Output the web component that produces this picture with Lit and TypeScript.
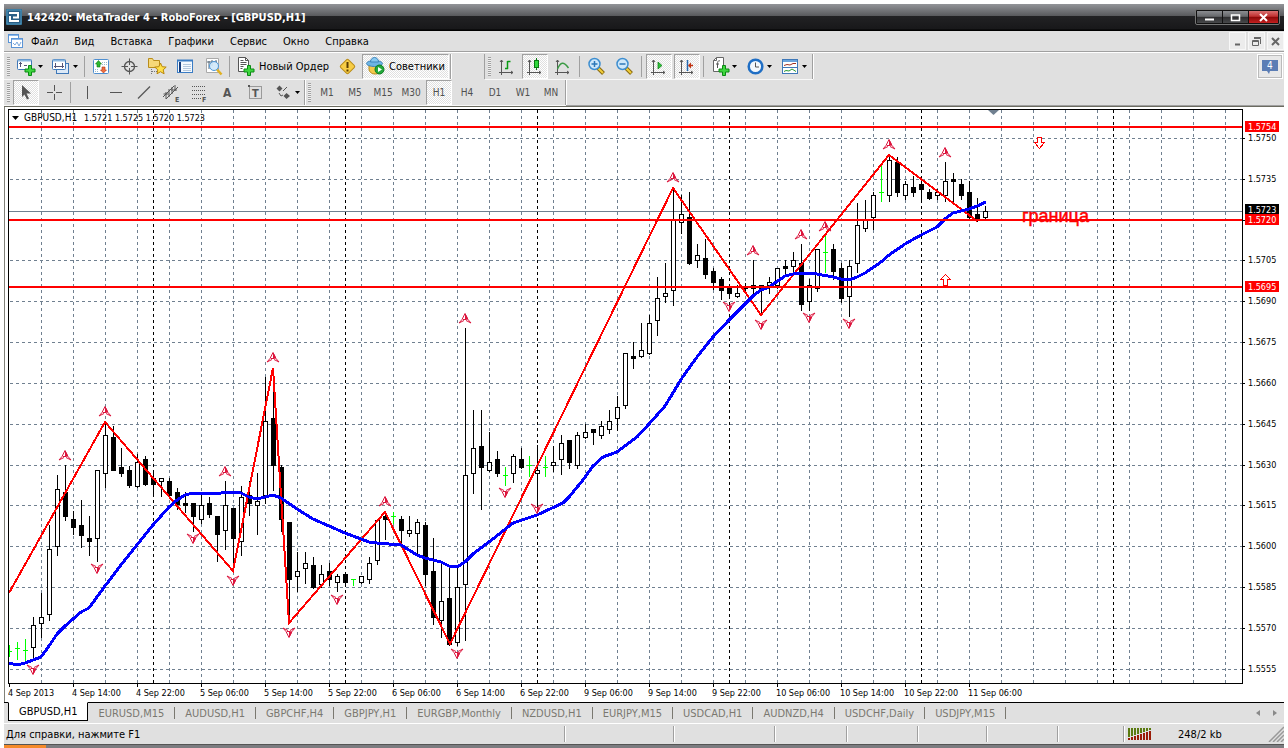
import { LitElement, html, svg, css, nothing } from "lit";
import { customElement, property } from "lit/decorators.js";

type Candle = [high: number, top: number, bottom: number, low: number, kind: "u" | "d" | "g"];

const STEP = 8;
const FIRST_X = 9;

const CANDLES: Candle[] = [
  [645, 651, 651, 656, "g"], [642, 648, 648, 659, "g"], [639, 650, 650, 661, "g"], [617, 625, 647, 659, "u"],
  [593, 617, 623, 637, "u"], [525, 549, 614, 620, "u"], [475, 489, 546, 555, "u"], [465, 492, 516, 520, "d"],
  [511, 519, 527, 534, "d"], [500, 525, 535, 547, "d"], [516, 538, 541, 555, "d"], [470, 470, 538, 561, "u"],
  [423, 435, 473, 487, "u"], [426, 437, 470, 470, "d"], [448, 467, 473, 476, "d"], [466, 470, 485, 487, "d"],
  [454, 462, 486, 487, "u"], [456, 459, 484, 485, "d"], [473, 478, 484, 496, "d"], [478, 478, 481, 496, "u"],
  [478, 481, 495, 496, "d"], [488, 492, 504, 509, "d"], [492, 503, 505, 512, "d"], [503, 503, 516, 531, "d"],
  [492, 505, 519, 523, "u"], [497, 503, 514, 517, "d"], [516, 516, 534, 561, "d"], [481, 505, 530, 549, "u"],
  [508, 508, 538, 570, "d"], [486, 497, 541, 555, "u"], [481, 495, 503, 515, "d"], [473, 501, 505, 534, "u"],
  [377, 421, 495, 503, "u"], [368, 418, 465, 490, "d"], [465, 467, 519, 531, "d"], [522, 522, 579, 623, "d"],
  [552, 571, 576, 591, "u"], [552, 563, 568, 583, "u"], [557, 565, 587, 588, "d"], [565, 574, 584, 587, "u"],
  [563, 571, 579, 585, "d"], [574, 576, 582, 591, "u"], [574, 574, 582, 586, "d"], [579, 579, 579, 585, "g"],
  [576, 576, 582, 583, "u"], [557, 563, 579, 583, "u"], [520, 520, 560, 564, "u"], [512, 516, 519, 539, "d"],
  [512, 516, 516, 523, "g"], [516, 519, 530, 543, "d"], [516, 530, 533, 536, "u"], [519, 522, 533, 553, "u"],
  [522, 525, 574, 585, "d"], [538, 571, 617, 624, "d"], [562, 601, 620, 637, "u"], [567, 598, 644, 645, "d"],
  [567, 587, 642, 645, "u"], [328, 475, 584, 640, "u"], [410, 448, 473, 493, "u"], [410, 446, 467, 509, "d"],
  [432, 462, 470, 471, "u"], [451, 459, 473, 476, "d"], [467, 475, 475, 485, "g"], [454, 456, 473, 482, "u"],
  [448, 459, 467, 468, "d"], [456, 465, 465, 476, "g"], [445, 470, 473, 507, "u"], [456, 467, 467, 476, "g"],
  [446, 462, 465, 471, "u"], [435, 443, 459, 474, "u"], [440, 440, 462, 468, "d"], [432, 435, 465, 468, "u"],
  [424, 432, 437, 438, "u"], [429, 429, 432, 444, "d"], [421, 426, 435, 438, "u"], [410, 421, 429, 433, "u"],
  [396, 407, 418, 430, "u"], [353, 353, 405, 408, "u"], [342, 356, 358, 368, "d"], [323, 350, 356, 357, "u"],
  [315, 323, 353, 354, "u"], [277, 298, 320, 335, "u"], [263, 293, 296, 302, "u"], [190, 220, 290, 305, "u"],
  [195, 214, 222, 233, "u"], [192, 217, 263, 264, "d"], [244, 255, 260, 267, "u"], [239, 258, 274, 278, "d"],
  [268, 271, 282, 289, "d"], [277, 279, 290, 299, "d"], [288, 288, 293, 298, "d"], [285, 293, 296, 297, "u"],
  [283, 286, 288, 293, "u"], [260, 285, 288, 293, "d"], [285, 285, 288, 313, "d"], [277, 282, 285, 293, "u"],
  [268, 268, 285, 288, "u"], [260, 266, 268, 275, "d"], [252, 260, 266, 273, "u"], [244, 263, 304, 310, "d"],
  [279, 285, 301, 310, "u"], [249, 249, 288, 291, "u"], [236, 252, 252, 272, "g"], [244, 249, 271, 279, "d"],
  [263, 268, 298, 302, "d"], [260, 266, 296, 316, "u"], [203, 225, 263, 272, "u"], [200, 220, 228, 231, "u"],
  [192, 195, 217, 229, "u"], [163, 192, 192, 201, "g"], [155, 160, 195, 201, "u"], [157, 162, 192, 196, "d"],
  [181, 184, 195, 199, "u"], [176, 187, 192, 196, "d"], [180, 184, 189, 200, "d"], [189, 192, 198, 199, "d"],
  [189, 192, 195, 199, "u"], [162, 181, 195, 201, "u"], [173, 179, 181, 203, "d"], [179, 184, 195, 199, "d"],
  [181, 192, 217, 218, "d"], [198, 214, 219, 221, "d"], [206, 211, 217, 219, "u"],
];

const ZIGZAG = "9,593 105,422 233,571 273,368 289,623 385,512 450,644 673,188 761,315 889,155 977,221";

const AVERAGE =
  "9,663 17,665 25,663 41,657 49,646 57,634 65,626 73,619 81,612 89,608 97,597 105,586 121,565 129,555 137,545 " +
  "153,525 169,507 177,500 185,495 193,493 201,494 209,493 217,494 225,492 241,493 249,497 257,499 273,495 281,498 " +
  "297,509 313,519 329,526 345,533 369,542 377,543 401,545 409,550 417,555 425,558 441,562 449,566 457,567 465,562 " +
  "473,554 489,542 513,523 537,515 563,503 569,497 583,480 593,466 603,457 617,452 637,437 649,424 665,406 682,378 " +
  "697,357 713,337 729,320 753,296 761,290 769,287 785,276 793,274 809,273 817,274 833,277 841,279 849,280 857,277 " +
  "865,273 881,262 889,255 905,244 921,235 937,227 945,219 953,213 969,209 977,206 986,202";

const FRACTALS_UP = [[65, 455], [105, 411], [225, 471], [273, 357], [385, 501], [465, 318], [673, 177], [753, 250], [801, 234], [825, 226], [889, 144], [945, 152]];
const FRACTALS_DOWN = [[33, 669], [97, 568], [193, 538], [233, 580], [289, 632], [337, 599], [457, 653], [505, 492], [537, 508], [729, 306], [761, 324], [809, 317], [849, 323]];

const LEVELS = [127, 220, 287];
const PRICE_ROWS: [string, number][] = [
  ["1.5750", 138], ["1.5735", 179], ["1.5720", 220], ["1.5705", 260], ["1.5690", 301], ["1.5675", 342], ["1.5660", 383],
  ["1.5645", 424], ["1.5630", 465], ["1.5615", 505], ["1.5600", 546], ["1.5585", 587], ["1.5570", 628], ["1.5555", 669],
];
const PRICE_TAGS: [string, number, string][] = [
  ["1.5723", 210, "tag-now"], ["1.5754", 127, "tag-level"], ["1.5720", 220, "tag-level"], ["1.5695", 287, "tag-level"],
];
const TIMES = [
  "4 Sep 2013", "4 Sep 14:00", "4 Sep 22:00", "5 Sep 06:00", "5 Sep 14:00", "5 Sep 22:00", "6 Sep 06:00", "6 Sep 14:00",
  "6 Sep 22:00", "9 Sep 06:00", "9 Sep 14:00", "9 Sep 22:00", "10 Sep 06:00", "10 Sep 14:00", "10 Sep 22:00", "11 Sep 06:00",
];

const MAX_X = 2600;
const range = (from: number, to: number, step: number) => {
  const out: number[] = [];
  for (let v = from; v < to; v += step) out.push(v);
  return out;
};

@customElement("price-chart")
class PriceChart extends LitElement {
  static styles = css`
    :host { display: grid; grid-template-columns: minmax(0, 1fr) 41px; grid-template-rows: minmax(0, 1fr) 18px; background: #fff; padding: 2px 0 0 3px; font-family: "DejaVu Sans Condensed", "Noto Sans", sans-serif; font-size: 9px; }
    svg { display: block; width: 100%; height: 100%; min-height: 0; overflow: hidden; }
    .plot { border: 1px solid #000; overflow: hidden; min-height: 0; }
    .time { grid-column: 1 / 3; min-height: 0; }
    .crisp { shape-rendering: crispEdges; }
    .grid { stroke: #708090; stroke-dasharray: 3 3; fill: none; }
    .day { stroke: #000; stroke-dasharray: 3 3; }
    .level { stroke: #f00; stroke-width: 2; }
    .bid { stroke: #708090; }
    .wick { fill: #000; }
    .hollow { fill: #fff; stroke: #000; }
    .solid { fill: #000; }
    .green { fill: #0f0; }
    .zigzag { fill: none; stroke: #f00; stroke-width: 2; }
    .average { fill: none; stroke: #00f; stroke-width: 3; }
    .fractal { fill: none; stroke: #dc143c; }
    .fractal-fill { fill: #dc143c; }
    .signal { fill: #fff; stroke: #f00; }
    .tag-now { fill: #000; }
    .tag-level { fill: #f00; }
    text { fill: #000; }
    .symbol { font-size: 10px; }
    text.note { font: 18px "Liberation Sans", Arial, sans-serif; fill: #f00; stroke: #f00; stroke-width: 0.5px; }
    text.tag-text { fill: #fff; }
    .axis { stroke: #000; }
  `;

  private candle([high, top, bottom, low, kind]: Candle, i: number) {
    const x = FIRST_X + i * STEP;
    const wick = svg`<rect class=${kind === "g" ? "green" : "wick"} x=${x} y=${high} width="1" height=${low - high + 1}></rect>`;
    if (kind === "g") return svg`${wick}<rect class="green" x=${x - 2} y=${top} width="5" height="1"></rect>`;
    if (kind === "u") return svg`${wick}<rect class="hollow" x=${x - 1.5} y=${top + 0.5} width="4" height=${bottom - top}></rect>`;
    return svg`${wick}<rect class="solid" x=${x - 2} y=${top} width="5" height=${bottom - top + 1}></rect>`;
  }

  private fractal(x: number, y: number, up: boolean) {
    return svg`<g transform="translate(${x} ${y + 0.5}) scale(1 ${up ? 1 : -1})">
      <path class="fractal-fill" d="M0-5 2-2 3 1 0 1.500Z"></path>
      <path class="fractal" d="M0-5-3 1-6 4.500-1 2M0-5 3 1 6 4.500 1 2M-2 1H1"></path></g>`;
  }

  render() {
    return html`
      <div class="plot">
        <svg role="img" aria-label="GBPUSD H1">
          <g transform="translate(-9 -110)">
            <g class="crisp">
              ${range(41, MAX_X, 32).map((x) => svg`<line class="grid" x1=${x + 0.5} x2=${x + 0.5} y1="110" y2="2000"></line>`)}
              ${PRICE_ROWS.map(([, y]) => svg`<line class="grid" x1="10" x2=${MAX_X} y1=${y + 0.5} y2=${y + 0.5}></line>`)}
              ${range(153, MAX_X, 192).map((x) => svg`<line class="day" x1=${x + 0.5} x2=${x + 0.5} y1="110" y2="2000"></line>`)}
              <line class="bid" x1="9" x2=${MAX_X} y1="211.500" y2="211.500"></line>
              ${CANDLES.map((c, i) => this.candle(c, i))}
              <polyline class="zigzag" points=${ZIGZAG}></polyline>
              <polyline class="average" points=${AVERAGE}></polyline>
              ${LEVELS.map((y) => svg`<line class="level" x1="9" x2=${MAX_X} y1=${y} y2=${y}></line>`)}
              <path class="signal" d="M1037.500 137.500h4v5h3l-5 6-5-6h3z"></path>
              <path class="signal" d="M943.500 285.500h4v-6h3l-5-5-5 5h3z"></path>
            </g>
            ${FRACTALS_UP.map(([x, y]) => this.fractal(x, y, true))}
            ${FRACTALS_DOWN.map(([x, y]) => this.fractal(x, y, false))}
            <path fill="#708090" d="M988 110h11l-5.500 5z"></path>
            <path d="M12 116h7l-3.500 4z"></path>
            <text class="symbol" x="24" y="121">GBPUSD,H1</text>
            <text x="84" y="121">1.5721 1.5725 1.5720 1.5723</text>
            <text class="note" x="1022" y="222">граница</text>
          </g>
        </svg>
      </div>
      <svg>
        <g transform="translate(-1243 -109)">
          ${PRICE_ROWS.map(([t, y]) => svg`<line class="axis crisp" x1="1243" x2="1245" y1=${y + 0.5} y2=${y + 0.5}></line><text x="1248" y=${y + 3}>${t}</text>`)}
          ${PRICE_TAGS.map(([t, y, c]) => svg`<rect class=${c} x="1245" y=${y - 6} width="34" height="11"></rect><text class="tag-text" x="1248" y=${y + 3}>${t}</text>`)}
        </g>
      </svg>
      <svg class="time">
        <g transform="translate(-8 0)">
          ${TIMES.map((t, i) => svg`<line class="axis crisp" x1=${9.5 + i * 64} x2=${9.5 + i * 64} y1="0" y2="3"></line><text x=${8 + i * 64} y="12">${t}</text>`)}
        </g>
      </svg>`;
  }
}

const axes = svg`<path d="M4.500 3v15M2 15.500h14M3 5l1.500-2L6 5M14 14l2 1.500-2 1.500" fill="none" stroke="#555"/>`;
const plus = svg`<path d="M11.500 8.500h3v3.500h3.500v3h-3.500v3.500h-3v-3.500H8v-3h3.500z" fill="#3fd63f" stroke="#0a8a14"/>`;
const lens = svg`<path d="M11 11l5.500 5.500" stroke="#8a6a10" stroke-width="4"/><path d="M11.500 11.500l4.500 4.500" stroke="#f2cf3c" stroke-width="2"/><circle cx="7.500" cy="7" r="5.500" fill="#cfe8fa" stroke="#3f8fd0" stroke-width="1.500"/>`;

const ICONS: Record<string, unknown> = {
  newChart: svg`<rect x=".5" y="2.500" width="14" height="10" rx="1" fill="#fff" stroke="#3f78b8"/><path d="M1 3.500h13" stroke="#8db8e0" stroke-width="2"/><path d="M3.500 5v5M2 6.500h3M7 8.500h3" stroke="#557"/>${plus}`,
  profiles: svg`<rect x="4.500" y="6.500" width="12" height="10" fill="#dce9f7" stroke="#3f78b8"/><rect x=".5" y="2.500" width="13" height="10" rx="1" fill="#fff" stroke="#3f78b8"/><path d="M1 3.500h12" stroke="#8db8e0" stroke-width="2"/><path d="M3.500 6v5M10.500 6v5M2 9.500h10" stroke="#557"/>`,
  market: svg`<rect x="1.500" y="2.500" width="15" height="14" rx="1" fill="#fff" stroke="#4f8fd0"/><path d="M10 5.500h5M10 7.500h5M3 12.500h4M3 14.500h4" stroke="#9bc" stroke-dasharray="1 1"/><path d="M6.500 3.500l3 3.500H8v3H5V7H3.500z" fill="#2eb82e" stroke="#0a7a12" stroke-width=".6"/><path d="M11.500 16l-3-3H10v-3h3v3h1.500z" fill="#f07040" stroke="#b03010" stroke-width=".6"/>`,
  cross: svg`<circle cx="9.500" cy="9.500" r="5" fill="none" stroke="#555" stroke-width="1.300"/><path d="M9.500 1.500v6.500M9.500 11v6.500M1.500 9.500H8M11 9.500h6.500" stroke="#555"/>`,
  star: svg`<path d="M.5 10.500v-9h4l1 2h6v7z" fill="#f6d878" stroke="#b98d1c"/><path d="M3.500 12v5M4 14.500h5" stroke="#777" stroke-dasharray="1 1"/><path d="M12.500 6l1.700 3.700 4 .4-3 2.700.9 4-3.600-2.100L9 16.800l.8-4-3-2.700 4-.4z" fill="#ffe04a" stroke="#b8860b"/>`,
  navigator: svg`<rect x="1.500" y="3.500" width="15" height="12" fill="#f4f9fe" stroke="#3a7cc4"/><path d="M1 3.500h16" stroke="#3a7cc4" stroke-width="2"/><path d="M4 5v10" stroke="#173d7a" stroke-width="2"/><path d="M7 7.500h8M7 9.500h8M7 11.500h8M7 13.500h8" stroke="#b4c8dc"/>`,
  terminal: svg`<path d="M2.500 1.500h12v14h-12z" fill="#fff" stroke="#aaa"/><path d="M5 12V4M8 9V3M12 6V3M3 5h10" stroke="#567"/><path d="M13 12.500l4.500 5" stroke="#e0b020" stroke-width="2.500"/><circle cx="10" cy="9" r="4.500" fill="#cfe8fa" fill-opacity=".9" stroke="#4f98d8"/>`,
  order: svg`<path d="M2.500.5h7l3 3v11h-10z" fill="#fff" stroke="#555"/><path d="M9.500.5v3h3M4.500 3.500h3M4.500 5.500h6M4.500 7.500h6M4.500 9.500h3M4.500 11.500h2" fill="none" stroke="#555"/>${plus}`,
  warning: svg`<rect x="4" y="4" width="11" height="11" rx="1.500" transform="rotate(45 9.500 9.500)" fill="#f7cd45" stroke="#b98d1c"/><path d="M9.500 5v6" stroke="#5a3c00" stroke-width="2"/><path d="M9.500 12.500v2" stroke="#5a3c00" stroke-width="2"/>`,
  advisor: svg`<path d="M3 8h12v4c0 4-3 5-6 5s-6-2-6-5z" fill="#f3c84b" stroke="#b98d1c"/><ellipse cx="8.500" cy="6.500" rx="8" ry="3" fill="#6db5e4" stroke="#3f85bb"/><path d="M4.500 5c0-6 8-6 8 0z" fill="#86c8f0" stroke="#3f85bb"/><circle cx="13.500" cy="12.500" r="4.500" fill="#22a83a" stroke="#0b7a1e"/><path d="M12 10v5l4-2.500z" fill="#fff"/>`,
  bars: svg`${axes}<path d="M10.500 4v8M10.500 4.500h3M8 11.500h3" stroke="#0a9a14" fill="none" stroke-width="1.500"/>`,
  candles: svg`${axes}<path d="M11.500 1v12" stroke="#0a7a12"/><rect x="9.500" y="3.500" width="4" height="7" fill="#2fd83a" stroke="#0a7a12"/>`,
  line: svg`${axes}<path d="M4.500 12c3-7 6-8 11-1" stroke="#3a9a44" fill="none" stroke-width="1.500"/>`,
  zoomIn: svg`${lens}<path d="M4.500 7h6M7.500 4v6" stroke="#2c78b8" stroke-width="1.500"/>`,
  zoomOut: svg`${lens}<path d="M4.500 7h6" stroke="#2c78b8" stroke-width="1.500"/>`,
  scroll: svg`${axes}<path d="M9 5v7l4-3.500z" fill="#2fc23a" stroke="#0a7a12" stroke-width=".7"/>`,
  shift: svg`${axes}<path d="M10.500 3v11" stroke="#2468b0" stroke-width="1.500"/><path d="M16 8.500h-3" stroke="#c03010" stroke-width="1.500"/><path d="M11 8.500l3-3v6z" fill="#c03010"/>`,
  indicator: svg`<path d="M2.500 3.500l3-3h7v14h-10z" fill="#fff" stroke="#666"/><path d="M2.500 3.500h3v-3" fill="none" stroke="#666"/><path d="M9 4c-2-1-2.500 1-2.500 3v4M5 7h3" stroke="#555" fill="none"/>${plus}`,
  clock: svg`<circle cx="9.500" cy="9.500" r="6.800" fill="#f4f8fc" stroke="#1f6ec4" stroke-width="2.500"/><path d="M9.500 5.500V10H13" fill="none" stroke="#555"/>`,
  template: svg`<rect x="1.500" y="2.500" width="15" height="14" fill="#fff" stroke="#3f78b8"/><path d="M2 4h14" stroke="#6ba4dc" stroke-width="2"/><path d="M2 10.500h14" stroke="#3f78b8"/><path d="M3 8.500l3-1 3 .5 3-1.500h3" stroke="#a03020" fill="none"/><path d="M3 14.500l2-1 3 .5 3-2 4 2.500" stroke="#2a9a34" fill="none"/>`,
  arrow: svg`<path d="M5 2l9 8.500H9.500l2.500 5-2 1-2.500-5L5 14z" fill="#555"/>`,
  plusLine: svg`<path d="M9.500 2v6M9.500 11v6M2 9.500h6M11 9.500h6" stroke="#555"/>`,
  vertical: svg`<path d="M9.500 3v13" stroke="#555"/>`,
  horizontal: svg`<path d="M4 9.500h12" stroke="#555"/>`,
  trend: svg`<path d="M4 15.500L16 3.500" stroke="#555" stroke-width="1.200"/>`,
  channel: svg`<path d="M1 14L12 3M4 16L16 4M4 9v7M7 6v8M10 4v7M13 2v6M1.500 11h5M9 7h6" stroke="#555"/><text x="13" y="19" font-size="7" font-weight="bold">E</text>`,
  fibo: svg`<path d="M2 3.500h14M2 7.500h14M2 11.500h14M2 15.500h9" stroke="#555" stroke-dasharray="1 1"/><text x="12" y="19" font-size="7" font-weight="bold">F</text>`,
  letter: svg`<text x="5" y="14" font-size="12" font-weight="bold">A</text>`,
  label: svg`<rect x="3.500" y="3.500" width="12" height="12" fill="none" stroke="#555" stroke-dasharray="1 1"/><text x="6" y="14" font-size="11" font-weight="bold">T</text><path d="M2 2h2v2H2z" fill="#555"/>`,
  objects: svg`<path d="M5.500 2.500l3 3-3 3-3-3zM12.500 10l3.500 3-3.500 3-3-3z" fill="#555"/><path d="M5 10l2 3 2-1M9 8l4-4" stroke="#555" fill="none"/>`,
  doc: svg`<rect x=".5" y=".5" width="10" height="8" fill="#fff" stroke="#5b94d6"/><rect x="3.500" y="4.500" width="11" height="9" fill="#fff" stroke="#5b94d6"/><path d="M4 5.500h10M1 1.500h9" stroke="#8db8e8"/><path d="M5 9l2 2 2-3 2 4 2-4" fill="none" stroke="#7aa8dc"/>`,
};

@customElement("tool-button")
class ToolButton extends LitElement {
  @property() icon = "";
  @property() name = "";
  @property() text = "";
  @property({ type: Boolean }) pressed = false;
  @property({ type: Boolean }) menu = false;
  @property({ type: Boolean }) small = false;

  static styles = css`
    :host { display: flex; flex: none; }
    button { display: flex; align-items: center; justify-content: center; gap: 2px; box-sizing: border-box; width: 28px; height: 100%; margin: 0; padding: 0; border: 1px solid transparent; background: none; color: #000; font: 11px "DejaVu Sans Condensed", "Noto Sans", sans-serif; white-space: nowrap; }
    .pressed { background: repeating-conic-gradient(#fff 0 25%, #e0e0e0 0 50%) 0 0 / 2px 2px; border-color: #a0a0a0 #fff #fff #a0a0a0; background-clip: padding-box; width: 26px; margin: 0 1px; }
    .menu { width: 35px; }
    .wide { width: auto; padding: 0 3px; gap: 4px; }
    .small { font-size: 10px; color: #505050; }
    svg { flex: none; width: 19px; height: 19px; fill: #555; font-family: "DejaVu Sans Condensed", sans-serif; overflow: visible; }
    .caret { width: 5px; height: 3px; fill: #000; }
  `;

  render() {
    const cls = [this.text && this.icon ? "wide" : "", this.menu ? "menu" : "", this.small ? "small" : ""].join(" ");
    const state = this.pressed ? (this.text && this.icon ? "pressed wide" : "pressed") : "";
    return html`<button class="${state} ${cls}" aria-label=${this.text || this.name} aria-pressed=${this.pressed}>
      ${this.icon ? html`<svg viewBox="0 0 19 19">${ICONS[this.icon]}</svg>` : nothing}
      ${this.text ? html`<span>${this.text}</span>` : nothing}
      ${this.menu ? html`<svg class="caret" viewBox="0 0 5 3"><path d="M0 0h5L2.500 3z"></path></svg>` : nothing}
    </button>`;
  }
}

const tool = (icon: string, name: string, opts: { pressed?: boolean; menu?: boolean } = {}) =>
  html`<tool-button icon=${icon} name=${name} ?pressed=${!!opts.pressed} ?menu=${!!opts.menu}></tool-button>`;

const MENU = ["Файл", "Вид", "Вставка", "Графики", "Сервис", "Окно", "Справка"];
const PERIODS = ["M1", "M5", "M15", "M30", "H1", "H4", "D1", "W1", "MN"];
const TABS = ["EURUSD,M15", "AUDUSD,H1", "GBPCHF,H4", "GBPJPY,H1", "EURGBP,Monthly", "NZDUSD,H1", "EURJPY,M15", "USDCAD,H1", "AUDNZD,H4", "USDCHF,Daily", "USDJPY,M15"];

@customElement("app-root")
class AppRoot extends LitElement {
  static styles = css`
    :host { display: block; background: #fff; color: #000; font: 11px "DejaVu Sans Condensed", "Noto Sans", sans-serif; }
    .window { box-sizing: border-box; display: flex; flex-direction: column; height: 100vh; padding: 4px 4px 0; }
    .face { background: #e0e0e0; }
    button { margin: 0; padding: 0; font: inherit; }

    .title { display: flex; align-items: center; flex: none; box-sizing: border-box; height: 27px; padding: 0 4px 1px 2px; gap: 5px; color: #fff; font-weight: bold; background: linear-gradient(#929498 0, #58595c 12px, #222224 12px, #18181a 25px, #000 26px); }
    .title h1 { flex: 1; margin: 0; font: inherit; white-space: nowrap; }
    .logo { width: 16px; height: 16px; }
    .frame { display: flex; gap: 1px; padding: 1px; border: 1px solid #777; border-radius: 2px; background: #111; }
    .frame button { display: grid; place-items: center; width: 25px; height: 12px; border: 0; background: linear-gradient(#8a8c90, #66686b 45%, #2d2d2f 50%, #48494b); }
    .frame .close { width: 29px; background: linear-gradient(#d87070, #c03030 45%, #8a0808 50%, #c42020); }
    .frame svg { width: 11px; height: 9px; fill: none; stroke: #fff; }

    .menubar { display: flex; align-items: center; flex: none; height: 20px; padding: 0 0 0 4px; border-bottom: 1px solid #a0a0a0; }
    .menubar svg { width: 15px; height: 14px; }
    .menubar button { padding: 0 8px; border: 0; background: none; white-space: nowrap; }
    .mdi { display: flex; gap: 2px; margin-left: auto; }
    .mdi button { display: grid; place-items: center; box-sizing: border-box; width: 17px; height: 18px; padding: 0; background: #ececec; border: 1px solid #f8f8f8; }
    .mdi svg { width: 9px; height: 9px; fill: none; stroke: #666; }

    .bar { display: flex; flex: none; box-sizing: border-box; height: 28px; padding: 1px 0; border-top: 1px solid #fff; }
    .group { display: flex; height: 100%; padding-left: 3px; border-right: 1px solid #a0a0a0; box-shadow: 1px 0 #fff, 0 1px #f8f8f8; }
    .spacer { width: 33px; border-right: 1px solid #a0a0a0; }
    .grip { width: 3px; margin: 3px 2px 3px 0; background: repeating-linear-gradient(#a0a0a0 0 1px, #f0f0f0 1px 2px); }
    .sep { width: 1px; margin: 2px 2px; background: #a0a0a0; }
    .charting .sep { margin-right: 3px; }
    .second { height: 26px; padding: 0; border: 0; border-bottom: 1px solid #a0a0a0; }
    .alert { display: grid; place-items: center; box-sizing: border-box; width: 26px; margin: 0 1px 0 auto; border: 1px solid #fff; outline: 1px solid #bbb; outline-offset: -2px; background: #e8e8e8; }
    .alert svg { width: 16px; height: 16px; }

    .workspace { display: flex; flex: 1; min-height: 0; padding: 0 0 0 1px; border-top: 1px solid #6b6b60; background: #808078; }
    price-chart { flex: 1; min-width: 0; }

    .tabs { display: flex; flex: none; box-sizing: border-box; height: 21px; padding-left: 4px; border-top: 1px solid #000; color: #7a7870; }
    .tabs button { height: 18px; padding: 0 10px; border: 0; background: none; color: inherit; white-space: nowrap; }
    .tabs .current { margin-top: -1px; height: 19px; border: 1px solid #000; border-top-color: #fff; background: #fff; color: #000; }
    .tab { display: flex; align-items: center; }
    .tab::after { content: ""; width: 1px; height: 12px; background: #7a7870; }
    .arrows { display: flex; align-items: center; gap: 13px; margin-left: auto; padding-right: 7px; }
    .arrows button { display: flex; padding: 0; }
    .arrows svg { width: 4px; height: 6px; margin: auto; fill: #8a8a8a; }

    .status { display: flex; flex: none; box-sizing: border-box; height: 21px; align-items: center; border-top: 1px solid #fff; padding-left: 2px; }
    .status p { flex: 1; margin: 0; white-space: nowrap; }
    .cell { box-sizing: border-box; height: 16px; border-left: 1px solid #a0a0a0; box-shadow: inset 1px 0 #fff; }
    .c1 { width: 109px; } .c2 { width: 101px; } .c3 { width: 72px; } .c4 { width: 71px; } .c5 { width: 69px; } .c6 { width: 71px; } .c7 { width: 66px; }
    .traffic { display: flex; align-items: center; width: 161px; padding-left: 4px; }
    .traffic svg { width: 24px; height: 12px; }
    .traffic span { margin-left: 26px; }
    .traffic .grow { margin-left: auto; align-self: end; width: 16px; height: 16px; }

    .taskbar { flex: none; height: 4px; background: linear-gradient(90deg, #f58a2a 42px, transparent 42px), #7c7c80; border-top: 1px solid #555; box-sizing: border-box; }
  `;

  render() {
    return html`
      <div class="window">
        <header class="title">
          <svg class="logo" viewBox="0 0 16 16"><rect width="16" height="16" rx="1" fill="#2a5f86"/><rect x="1" y="1" width="14" height="14" fill="none" stroke="#4e9bc0"/><path d="M3 4h9v4.500H7M4 7v5h9" fill="none" stroke="#fff" stroke-width="2"/></svg>
          <h1>142420: MetaTrader 4 - RoboForex - [GBPUSD,H1]</h1>
          <div class="frame">
            <button aria-label="Свернуть"><svg><path d="M1 6.500h9" stroke-width="2"/></svg></button>
            <button aria-label="Развернуть"><svg><path d="M1.500 2h8v5.500h-8z" stroke-width="1.500"/></svg></button>
            <button class="close" aria-label="Закрыть"><svg><path d="M2 1l7 7M9 1L2 8" stroke-width="2"/></svg></button>
          </div>
        </header>
        <nav class="menubar face">
          <svg viewBox="0 0 15 14">${ICONS.doc}</svg>
          ${MENU.map((m) => html`<button>${m}</button>`)}
          <div class="mdi">
            <button aria-label="Свернуть окно"><svg><path d="M2 7.500h5" stroke-width="2"/></svg></button>
            <button aria-label="Восстановить окно"><svg><path d="M.5 3.500h6v5h-6zM2 1.500h6.500V7M.5 4.500h6M2 .5h7"/></svg></button>
            <button aria-label="Закрыть окно"><svg><path d="M1 1l7 7M8 1L1 8" stroke-width="2"/></svg></button>
          </div>
        </nav>
        <div class="bar face">
          <div class="group">
            <i class="grip"></i>
            ${tool("newChart", "Новый график", { menu: true })}${tool("profiles", "Профили", { menu: true })}
            <i class="sep"></i>
            ${tool("market", "Обзор рынка")}${tool("cross", "Окно данных")}${tool("star", "Навигатор")}${tool("navigator", "Терминал")}${tool("terminal", "Тестер стратегий")}
            <i class="sep"></i>
            <tool-button icon="order" text="Новый Ордер"></tool-button>
            ${tool("warning", "MetaEditor")}
            <tool-button icon="advisor" text="Советники" pressed></tool-button>
          </div>
          <div class="spacer"></div>
          <div class="group charting">
            <i class="grip"></i>
            ${tool("bars", "Бары")}${tool("candles", "Японские свечи", { pressed: true })}${tool("line", "Линия")}
            <i class="sep"></i>
            ${tool("zoomIn", "Увеличить")}${tool("zoomOut", "Уменьшить")}
            <i class="sep"></i>
            ${tool("scroll", "Автопрокрутка", { pressed: true })}${tool("shift", "Сдвиг графика", { pressed: true })}
            <i class="sep"></i>
            ${tool("indicator", "Индикаторы", { menu: true })}${tool("clock", "Периоды", { menu: true })}${tool("template", "Шаблоны", { menu: true })}
          </div>
          <button class="alert" aria-label="4 сообщения"><svg><path d="M0 1h16v11H8l-1 3-2-3H0z" fill="#5b7db5"/><text x="5" y="10" fill="#fff" font-size="10">4</text></svg></button>
        </div>
        <div class="bar second face">
          <div class="group">
            <i class="grip"></i>
            ${tool("arrow", "Курсор", { pressed: true })}${tool("plusLine", "Перекрестие")}
            <i class="sep"></i>
            ${tool("vertical", "Вертикальная линия")}${tool("horizontal", "Горизонтальная линия")}${tool("trend", "Трендовая линия")}${tool("channel", "Канал")}${tool("fibo", "Линии Фибоначчи")}${tool("letter", "Текст")}${tool("label", "Метка")}${tool("objects", "Стрелки", { menu: true })}
          </div>
          <div class="group">
            <i class="grip"></i>
            ${PERIODS.map((p) => html`<tool-button text=${p} small ?pressed=${p === "H1"}></tool-button>`)}
          </div>
        </div>
        <main class="workspace"><price-chart></price-chart></main>
        <nav class="tabs face">
          <button class="current">GBPUSD,H1</button>
          ${TABS.map((t) => html`<div class="tab"><button>${t}</button></div>`)}
          <div class="arrows">
            <button aria-label="Назад"><svg><path d="M4 0v6L0 3z"/></svg></button>
            <button aria-label="Вперёд"><svg><path d="M0 0v6l4-3z"/></svg></button>
          </div>
        </nav>
        <footer class="status face">
          <p>Для справки, нажмите F1</p>
          <div class="cell c1"></div><div class="cell c2"></div><div class="cell c3"></div><div class="cell c4"></div><div class="cell c5"></div><div class="cell c6"></div><div class="cell c7"></div>
          <div class="cell traffic">
            <svg viewBox="0 0 24 12">${range(0, 8, 1).map((i) => svg`<rect x=${i * 3} y="0" width="2" height=${9 - i} fill="#5a7a10"/><rect x=${i * 3} y=${10 - i} width="2" height=${2 + i} fill="#9a1c08"/>`)}</svg>
            <span>248/2 kb</span>
            <svg class="grow" viewBox="0 0 16 16"><path d="M1 16L16 1M5 16L16 5M9 16l7-7M13 16l3-3" stroke="#999" stroke-width="1.500"/></svg>
          </div>
        </footer>
        <div class="taskbar"></div>
      </div>`;
  }
}
